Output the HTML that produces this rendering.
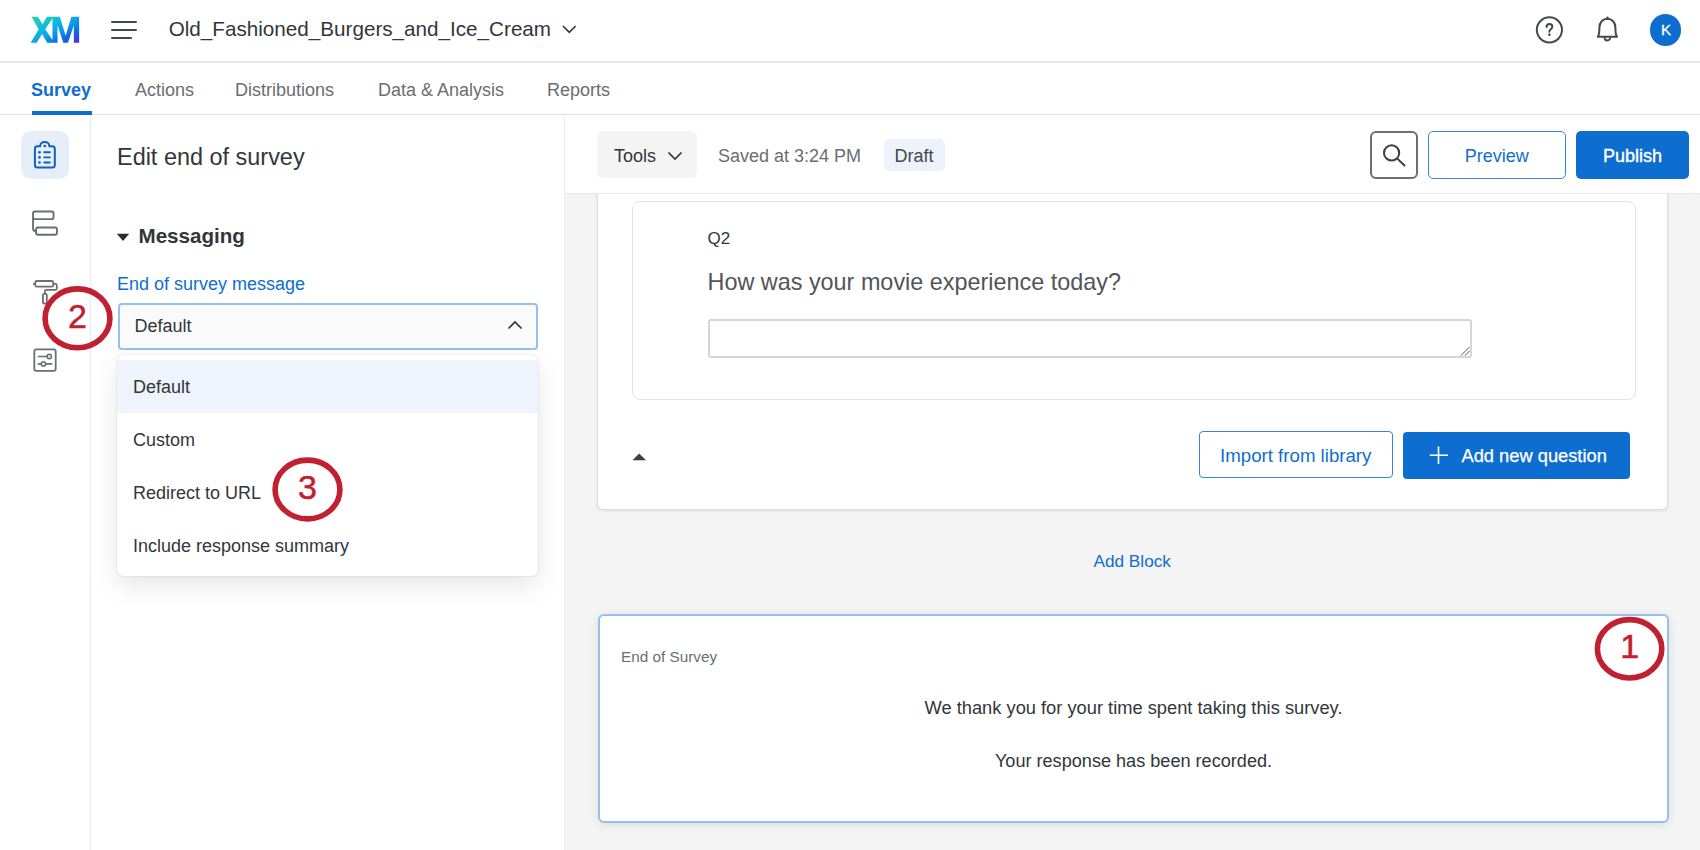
<!DOCTYPE html>
<html><head><meta charset="utf-8">
<style>
*{box-sizing:border-box;margin:0;padding:0}
html,body{width:1700px;height:850px;overflow:hidden;background:#fff;font-family:"Liberation Sans",sans-serif;color:#32363a}
.a{position:absolute}
.t{position:absolute;white-space:nowrap;line-height:1}
svg{position:absolute;overflow:visible}
</style></head><body>

<!-- HEADER -->
<svg class="a" style="left:0;top:0" width="100" height="60" viewBox="0 0 100 60">
  <defs>
    <linearGradient id="xmg" x1="44.1" y1="9.9" x2="65.9" y2="50.1" gradientUnits="userSpaceOnUse">
      <stop offset="0" stop-color="#24d99a"/>
      <stop offset="0.2" stop-color="#16c8c4"/>
      <stop offset="0.4" stop-color="#10b2e6"/>
      <stop offset="0.55" stop-color="#0d9cec"/>
      <stop offset="0.75" stop-color="#0a6fe0"/>
      <stop offset="0.88" stop-color="#3348e0"/>
      <stop offset="1" stop-color="#5a1ee0"/>
    </linearGradient>
  </defs>
  <path fill="url(#xmg)" fill-rule="evenodd" d="M31.5 16.87 L37.86 16.87 L42.51 24.28 L46.96 16.87 L59.87 16.87 L65.59 35.71 L71.31 16.87 L79.14 16.87 L79.14 42.7 L73.85 42.7 L73.85 25.13 L67.92 42.7 L63.26 42.7 L57.54 25.13 L57.54 42.7 L47.17 42.7 L42.09 34.02 L36.59 42.7 L30.66 42.7 L38.7 29.36 Z M45.27 29.36 L52.46 18.35 L52.46 39.95 Z"/>
</svg>
<div class="a" style="left:111px;top:21px;width:26px;height:2px;background:#44474b;border-radius:1px"></div>
<div class="a" style="left:111px;top:28.8px;width:26px;height:2px;background:#44474b;border-radius:1px"></div>
<div class="a" style="left:111px;top:36.7px;width:21px;height:2px;background:#44474b;border-radius:1px"></div>
<div class="t" style="left:168.7px;top:18.7px;font-size:20.66px;color:#32363a">Old_Fashioned_Burgers_and_Ice_Cream</div>
<svg style="left:562px;top:25px" width="15" height="9" viewBox="0 0 15 9"><path d="M1 1 L7.3 7.3 L13.6 1" fill="none" stroke="#32363a" stroke-width="1.6"/></svg>

<!-- help icon -->
<svg style="left:1535px;top:16px" width="28" height="28" viewBox="0 0 28 28">
  <circle cx="14.4" cy="13.85" r="12.6" fill="none" stroke="#44474b" stroke-width="2"/>
  <path d="M11.6 11.1 C11.6 9.2 12.9 8.1 14.5 8.1 C16.1 8.1 17.3 9.2 17.3 10.8 C17.3 12.4 16 12.9 15.1 13.8 C14.6 14.3 14.4 14.8 14.4 15.7" fill="none" stroke="#44474b" stroke-width="2" stroke-linecap="round"/>
  <circle cx="14.4" cy="18.7" r="1.3" fill="#44474b"/>
</svg>
<!-- bell -->
<svg style="left:1596px;top:16px" width="24" height="28" viewBox="0 0 24 28">
  <path d="M1.8 20.8 L21 20.8 C19.8 19.5 19.4 17 19.4 11.5 C19.4 6.3 16 2.8 11.4 2.8 C6.8 2.8 3.4 6.3 3.4 11.5 C3.4 17 3 19.5 1.8 20.8 Z" fill="none" stroke="#44474b" stroke-width="2" stroke-linejoin="round"/>
  <path d="M8.5 21.2 C8.5 25.6 14.3 25.6 14.3 21.2" fill="none" stroke="#44474b" stroke-width="1.9"/>
  <path d="M11.4 1.6 L11.4 3" stroke="#44474b" stroke-width="2.2" stroke-linecap="round"/>
</svg>
<!-- avatar -->
<div class="a" style="left:1649.5px;top:14px;width:31.7px;height:31.7px;border-radius:50%;background:#0e6ed0"></div>
<div class="t" style="left:1650px;top:22px;width:32px;text-align:center;font-size:15px;color:#fff;-webkit-text-stroke:0.3px #fff">K</div>

<div class="a" style="left:0;top:61px;width:1700px;height:1.5px;background:#e6e6e6"></div>

<!-- TABS -->
<div class="t" style="left:31px;top:81.1px;font-size:18px;font-weight:700;color:#0e6ed0">Survey</div>
<div class="t" style="left:135px;top:81.1px;font-size:18px;color:#6b6d70">Actions</div>
<div class="t" style="left:235px;top:81.1px;font-size:18px;color:#6b6d70">Distributions</div>
<div class="t" style="left:378px;top:81.1px;font-size:18px;color:#6b6d70">Data &amp; Analysis</div>
<div class="t" style="left:547px;top:81.1px;font-size:18px;color:#6b6d70">Reports</div>
<div class="a" style="left:0;top:114px;width:1700px;height:1px;background:#e3e3e3"></div>
<div class="a" style="left:32px;top:111px;width:60px;height:4px;background:#0e6ed0"></div>

<!-- LEFT SIDEBAR -->
<div class="a" style="left:90px;top:115px;width:1px;height:735px;background:#ececec"></div>
<div class="a" style="left:21px;top:131px;width:48px;height:48px;border-radius:10px;background:#e6eefa"></div>

<!-- EDIT PANEL -->
<div class="a" style="left:564px;top:115px;width:2px;height:735px;background:#ececec"></div>
<div class="t" style="left:117px;top:145.6px;font-size:23.44px;color:#32363a">Edit end of survey</div>
<svg style="left:116px;top:233px" width="14" height="9" viewBox="0 0 14 9"><path d="M0.8 0.8 L13.2 0.8 L7 8 Z" fill="#2a2d30"/></svg>
<div class="t" style="left:138.5px;top:225.8px;font-size:20.6px;font-weight:700;color:#32363a">Messaging</div>
<div class="t" style="left:117px;top:275.4px;font-size:18px;color:#0e6ed0">End of survey message</div>

<!-- MAIN AREA -->
<div class="a" style="left:565px;top:194px;width:1135px;height:656px;background:#f4f4f4"></div>
<div class="a" style="left:565px;top:193px;width:1135px;height:1px;background:#e3e3e3"></div>


<!-- BLOCK BG -->
<div class="a" style="left:597.3px;top:180px;width:1071.2px;height:329.5px;background:#fff;border:1px solid #dedede;border-radius:6px;box-shadow:0 1px 3px rgba(0,0,0,0.10)"></div>
<div class="a" style="left:565px;top:115px;width:1135px;height:78px;background:#fff"></div>
<div class="a" style="left:566px;top:192.5px;width:1134px;height:1.3px;background:#e8e8e8"></div>
<!-- TOOLBAR -->
<div class="a" style="left:597.3px;top:131px;width:100.2px;height:47.4px;border-radius:6px;background:#f4f4f4"></div>
<div class="t" style="left:614px;top:147px;font-size:18px;color:#32363a">Tools</div>
<svg style="left:667px;top:151px" width="16" height="10" viewBox="0 0 16 10"><path d="M1.5 1.5 L8 8 L14.5 1.5" fill="none" stroke="#32363a" stroke-width="1.7"/></svg>
<div class="t" style="left:718px;top:147px;font-size:18px;color:#6b6d70">Saved at 3:24 PM</div>
<div class="a" style="left:884px;top:139px;width:61px;height:31.6px;border-radius:5px;background:#edf2fb"></div>
<div class="t" style="left:894.5px;top:147px;font-size:18px;color:#45484c">Draft</div>
<div class="a" style="left:1370px;top:131px;width:48px;height:48px;border-radius:6px;border:2px solid #6b6e72;background:#fff"></div>
<svg style="left:1370px;top:131px" width="48" height="48" viewBox="0 0 48 48">
  <circle cx="21.6" cy="21.9" r="7.6" fill="none" stroke="#3b3e42" stroke-width="2"/>
  <path d="M27.1 27.4 L35 35" stroke="#3b3e42" stroke-width="2"/>
</svg>
<div class="a" style="left:1428px;top:131px;width:137.5px;height:47.5px;border-radius:5px;border:1.7px solid #3584de;background:#fff"></div>
<div class="t" style="left:1428px;top:147px;width:137.5px;text-align:center;font-size:18px;color:#0e6ed0">Preview</div>
<div class="a" style="left:1576px;top:131px;width:113px;height:47.5px;border-radius:5px;background:#0e6ed0"></div>
<div class="t" style="left:1576px;top:147px;width:113px;text-align:center;font-size:18px;color:#fff;-webkit-text-stroke:0.35px #fff">Publish</div>

<!-- BLOCK CARD -->
<div class="a" style="left:631.5px;top:201px;width:1004px;height:198.5px;background:#fff;border:1.5px solid #e3e3e3;border-radius:8px"></div>
<div class="t" style="left:707.5px;top:230.1px;font-size:17px;color:#32363a">Q2</div>
<div class="t" style="left:707.5px;top:270.6px;font-size:23.4px;color:#525558">How was your movie experience today?</div>
<div class="a" style="left:707.5px;top:319px;width:764px;height:38.5px;border:2px solid #d6d6d6;border-radius:3px;background:#fff"></div>
<svg style="left:1459px;top:345px" width="12" height="12" viewBox="0 0 12 12"><path d="M2 10.5 L10.5 2 M6 10.5 L10.5 6" stroke="#555" stroke-width="1"/></svg>
<svg style="left:632px;top:453px" width="15" height="8" viewBox="0 0 15 8"><path d="M0.5 7.2 L7.2 0.6 L14 7.2 Z" fill="#3b3e42"/></svg>
<div class="a" style="left:1199px;top:431.3px;width:193.5px;height:47px;border-radius:4px;border:1.7px solid #3584de;background:#fff"></div>
<div class="t" style="left:1199px;top:446.5px;width:193.5px;text-align:center;font-size:18.67px;color:#0e6ed0">Import from library</div>
<div class="a" style="left:1403px;top:431.5px;width:227px;height:47px;border-radius:4px;background:#0e6ed0"></div>
<svg style="left:1429px;top:446px" width="20" height="19" viewBox="0 0 20 19"><path d="M9.5 0.5 L9.5 18 M0.8 9.3 L19 9.3" stroke="#fff" stroke-width="1.6"/></svg>
<div class="t" style="left:1461.5px;top:446.5px;font-size:18.3px;color:#fff;-webkit-text-stroke:0.25px #fff">Add new question</div>

<div class="t" style="left:1093.5px;top:552.9px;font-size:17.2px;color:#0e6ed0">Add Block</div>

<!-- END OF SURVEY CARD -->
<div class="a" style="left:597.5px;top:614.3px;width:1071.5px;height:209.2px;background:#fff;border:2px solid #94c0ec;border-radius:6px;box-shadow:0 2px 10px rgba(0,0,0,0.10)"></div>
<div class="t" style="left:621px;top:648.8px;font-size:15.3px;color:#6b6d70">End of Survey</div>
<div class="t" style="left:598px;top:699px;width:1071px;text-align:center;font-size:18.3px;color:#32363a">We thank you for your time spent taking this survey.</div>
<div class="t" style="left:598px;top:751.5px;width:1071px;text-align:center;font-size:18.13px;color:#32363a">Your response has been recorded.</div>


<!-- SELECT -->
<div class="a" style="left:117.5px;top:302.5px;width:420px;height:47px;border:2px solid #94c0ec;border-radius:4px;background:#fafafa"></div>
<div class="t" style="left:134.5px;top:317.2px;font-size:18px;color:#32363a">Default</div>
<svg style="left:507px;top:319px" width="16" height="12" viewBox="0 0 16 12"><path d="M1.5 9.5 L8 3 L14.5 9.5" fill="none" stroke="#32363a" stroke-width="1.7"/></svg>

<!-- DROPDOWN -->
<div class="a" style="left:117px;top:354.5px;width:421px;height:221.5px;background:#fff;border-radius:6px;box-shadow:0 0 1.5px rgba(0,0,0,0.22),0 10px 26px rgba(0,0,0,0.10)"></div>
<div class="a" style="left:117px;top:360px;width:421px;height:52.5px;background:#eef3fc"></div>
<div class="t" style="left:133px;top:378.2px;font-size:18px;color:#32363a">Default</div>
<div class="t" style="left:133px;top:431.2px;font-size:18px;color:#32363a">Custom</div>
<div class="t" style="left:133px;top:484px;font-size:18px;color:#32363a">Redirect to URL</div>
<div class="t" style="left:133px;top:536.6px;font-size:18px;color:#32363a">Include response summary</div>

<!-- SIDEBAR ICONS -->
<svg style="left:0;top:115px" width="90" height="280" viewBox="0 115 90 280">
  <path d="M40.2 146.2 L37.4 146.2 Q34.9 146.2 34.9 148.7 L34.9 165.1 Q34.9 167.6 37.4 167.6 L52.3 167.6 Q54.8 167.6 54.8 165.1 L54.8 148.7 Q54.8 146.2 52.3 146.2 L49.3 146.2 C49.3 143.6 47.3 141.9 44.75 141.9 C42.2 141.9 40.2 143.6 40.2 146.2 Z" fill="none" stroke="#1160c0" stroke-width="2" stroke-linejoin="round"/>
  <circle cx="44.8" cy="146" r="1.35" fill="#1160c0"/>
  <g fill="#1160c0">
    <circle cx="39.5" cy="152.3" r="1.35"/><circle cx="39.5" cy="157.4" r="1.35"/><circle cx="39.5" cy="162.5" r="1.35"/>
  </g>
  <path d="M44.25 152.3 L49.85 152.3 M44.25 157.4 L49.85 157.4 M44.25 162.5 L49.85 162.5" stroke="#1160c0" stroke-width="1.9" stroke-linecap="round"/>
  <g fill="none" stroke="#6b6e72" stroke-width="1.9">
    <rect x="33.05" y="211.5" width="20.5" height="7.6" rx="1.9"/>
    <rect x="36.05" y="227.45" width="20.9" height="7.3" rx="1.9"/>
    <path d="M33.05 218 L33.05 228.8 C33.05 230.5 34.2 231.2 36.05 231.2"/>
  </g>
  <g fill="none" stroke="#6b6e72" stroke-width="1.8">
    <rect x="35.3" y="281" width="17.9" height="5.7" rx="1.5"/>
    <path d="M33 284 L35.3 284"/>
    <path d="M53.2 283.8 L55.3 283.8 Q56.8 283.8 56.8 285.3 L56.8 288.4 Q56.8 289.9 55.3 289.9 L46.4 289.9 Q44.9 289.9 44.9 291.4 L44.9 293.9"/>
    <rect x="42.9" y="293.9" width="3.9" height="9.7" rx="1.3"/>
  </g>
  <g fill="none" stroke="#6b6e72" stroke-width="1.8">
    <rect x="34.3" y="349.4" width="21.4" height="21.4" rx="2"/>
    <path d="M38.3 356.5 L47 356.5 M38.3 363.9 L51.7 363.9" stroke-width="1.6" stroke-linecap="round"/>
  </g>
  <circle cx="49.3" cy="356.5" r="2.1" fill="#fff" stroke="#6b6e72" stroke-width="1.6"/>
  <circle cx="43.4" cy="363.9" r="2.1" fill="#fff" stroke="#6b6e72" stroke-width="1.6"/>
</svg>

<!-- ANNOTATION CIRCLES -->
<svg style="left:0;top:0" width="1700" height="850" viewBox="0 0 1700 850">
  <g fill="none" stroke="#c02030" stroke-width="5.6">
    <ellipse cx="77.5" cy="318.3" rx="32.4" ry="29.4"/>
    <ellipse cx="307.5" cy="489.5" rx="32.4" ry="29.4"/>
    <ellipse cx="1629.6" cy="648.8" rx="32.2" ry="29.2"/>
  </g>
</svg>
<div class="t" style="left:57.5px;top:299.3px;width:40px;text-align:center;font-size:34px;color:#c02030;-webkit-text-stroke:0.5px #c02030">2</div>
<div class="t" style="left:287.5px;top:470px;width:40px;text-align:center;font-size:34px;color:#c02030;-webkit-text-stroke:0.5px #c02030">3</div>
<div class="t" style="left:1609.6px;top:629.3px;width:40px;text-align:center;font-size:34px;color:#c02030;-webkit-text-stroke:0.5px #c02030">1</div>

</body></html>
